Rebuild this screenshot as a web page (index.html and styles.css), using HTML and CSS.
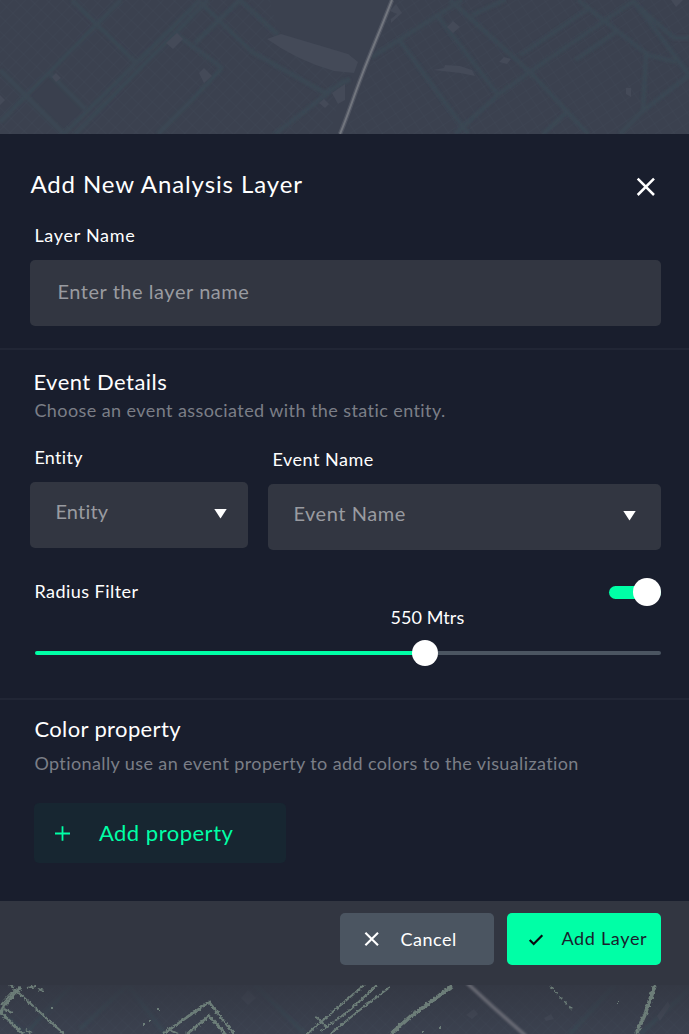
FILE: index.html
```html
<!DOCTYPE html>
<html lang="en">
<head>
<meta charset="utf-8">
<title>Add New Analysis Layer</title>
<link rel="stylesheet" href="styles.css">
</head>
<body>
<div class="screen">
  <svg class="map" width="689" height="134" viewBox="0 0 689 134" aria-hidden="true">
    <defs>
      <filter id="soft"><feGaussianBlur stdDeviation=".8"/></filter>
      <pattern id="blocks" width="9" height="11" patternUnits="userSpaceOnUse" patternTransform="rotate(44)"><path d="M0 0H9M0 0V11" class="street"/></pattern>
      <pattern id="blocks-east" width="11" height="9" patternUnits="userSpaceOnUse" patternTransform="rotate(-34)"><path d="M0 0H11M0 0V9" class="street"/></pattern>
    </defs>
    <path d="M0 0H270L278 34L350 54L330 134H0Z" fill="url(#blocks)"/>
    <path d="M394 0H689V134H345Z" fill="url(#blocks-east)"/>
    <path class="block-dark" d="M35 88L50 76L84 109L64 128L30 95Z"/>
    <g class="road" filter="url(#soft)">
      <path d="M0 122L121 0M64 134L200 0M75 134L208 0M0 70L64 134M48 72L85 109M72 0L135 62M175 33L222 68M195 43L240 0M198 0L252 52L325 93L350 79M240 0L278 35M158 134L190 102L222 68M275 134L345 80"/>
      <path d="M372 57L462 0M400 41L468 134M437 15L498 95M450 0L531 73L588 134M455 134L499 94L531 71L635 0M520 55L587 10M543 134L569 110M472 15L505 0M578 0L648 55L676 62M633 0L689 75M634 3L674 38L689 38M646 55L643 111L620 134M643 111L689 75M575 60L618 31"/>
    </g>
    <path class="area" d="M267 39L281 34L348 54L358 62L354 73L334 71Q298 61 267 39Z"/>
    <path class="area" d="M52 77L56 73L61 78L56 82ZM166 43L177 33L183 39L173 49ZM199 73L204 68L212 76L204 83ZM319 103L324 99L329 104L325 108ZM332 93L345 84V100L338 104ZM0 95L5 100L0 105ZM447 27L453 21L460 27L453 33ZM499 62L504 57L511 59L507 64ZM433 70L444 68L445 65L460 66L472 70L475 76L460 73ZM626 88H631V97L626 94ZM671 0H683L676 7ZM390 11L396 4L402 13L391 23V19L397 14Z"/>
    <path class="highway-glow" d="M392 0C380 31 372 49 362 75S348 115 340 134"/>
    <path class="highway" d="M392 0C380 31 372 49 362 75S348 115 340 134"/>
  </svg>

  <main class="dialog">
    <section class="section section-layer">
      <header class="dialog-header">
        <h1 class="title">Add New Analysis Layer</h1>
        <svg class="close" width="20" height="20" viewBox="0 0 20 20"><path d="M1.7 1.7L18 18M18 1.7L1.7 18" fill="none" stroke="#fff" stroke-width="2.5"/></svg>
      </header>
      <div class="label label-name">Layer Name</div>
      <div class="field field-name">Enter the layer name</div>
    </section>

    <section class="section section-event">
      <h2 class="heading heading-event">Event Details</h2>
      <p class="hint hint-event">Choose an event associated with the static entity.</p>
      <div class="selects">
        <div class="select-group entity">
          <div class="label entity-label">Entity</div>
          <div class="field select"><span class="entity-value">Entity</span><svg width="13" height="10" viewBox="0 0 13 10"><path d="M.3 0H12.7L6.5 9.5Z" fill="#fff"/></svg></div>
        </div>
        <div class="select-group event">
          <div class="label event-label">Event Name</div>
          <div class="field select"><span class="event-value">Event Name</span><svg width="13" height="10" viewBox="0 0 13 10"><path d="M.3 0H12.7L6.5 9.5Z" fill="#fff"/></svg></div>
        </div>
      </div>
      <div class="radius">
        <div class="label radius-label">Radius Filter</div>
        <div class="toggle"><span class="toggle-knob"></span></div>
      </div>
      <div class="radius-value">550 Mtrs</div>
      <div class="slider"><span class="slider-fill"></span><span class="slider-knob"></span><span class="slider-rest"></span></div>
    </section>

    <section class="section section-color">
      <h2 class="heading heading-color">Color property</h2>
      <p class="hint hint-color">Optionally use an event property to add colors to the visualization</p>
      <div class="add-property">
        <svg width="15" height="15" viewBox="0 0 15 15"><path d="M0 7.5H15M7.5 .3V14.7" stroke="#00ffa6" stroke-width="1.8"/></svg>
        <span class="add-property-text">Add property</span>
      </div>
    </section>
  </main>

  <footer class="actions">
    <div class="button cancel">
      <svg width="16" height="16" viewBox="0 0 16 16"><path d="M1.4 1.7L14 14.3M14 1.7L1.4 14.3" stroke="#fff" stroke-width="2.1"/></svg>
      <span class="cancel-text">Cancel</span>
    </div>
    <div class="button confirm">
      <svg width="16" height="14" viewBox="0 0 16 14"><path d="M1.7 7L5.7 11L14.3 2.3" fill="none" stroke="#080b10" stroke-width="2.2"/></svg>
      <span class="confirm-text">Add Layer</span>
    </div>
  </footer>

  <svg class="map" width="689" height="49" viewBox="0 0 689 49" aria-hidden="true">
    <defs>
      <linearGradient id="shade" x2="0" y2="1"><stop stop-color="#323641" stop-opacity=".8"/><stop offset="1" stop-color="#323641" stop-opacity="0"/></linearGradient>
      <pattern id="blocks-south" width="8" height="10" patternUnits="userSpaceOnUse" patternTransform="rotate(44)"><path d="M0 0H8M0 0V10" class="street"/></pattern>
      <filter id="rough" x="-5%" y="-20%" width="110%" height="140%"><feTurbulence type="fractalNoise" baseFrequency=".4" numOctaves="2" seed="4"/><feDisplacementMap in="SourceGraphic" scale="4" xChannelSelector="R" yChannelSelector="G"/><feGaussianBlur stdDeviation=".35"/></filter>
    </defs>
    <rect width="689" height="49" fill="url(#blocks-south)"/>
    <path class="road" filter="url(#soft)" d="M25 49L72 0M80 44L128 0L165 49M255 0L305 49M570 49L615 0M640 49L689 5M0 25L25 49"/>
    <path class="area" d="M241 13L248 5L256 13L248 20ZM466 30L474 24L478 29L472 34ZM544 33L551 29L554 34L546 36ZM657 31L668 16L670 21L660 36Z"/>
    <rect width="689" height="49" fill="url(#shade)"/>
    <g class="trace" filter="url(#rough)">
      <path d="M10 0L64 49" stroke-width="2"/>
      <path d="M21 2L3 22L1 28L23 49" stroke-width="3.2"/>
      <path d="M163 49L209 17L234 49M187 49L209 31L226 49" stroke-width="2.6"/>
      <path d="M307 49L364 0M321 46L350 25L377 0M330 49L366 20L390 2" stroke-width="2"/>
      <path d="M391 49L411 31L428 19L452 1" stroke-width="3.8"/>
      <path d="M655 0L646 27L636 49" stroke-width="4"/>
      <path d="M4 24L12 28M1 20L15 5M168 44L178 49M27 3L36 1M38 4L44 6M26 45L32 48M316 32L327 42" stroke-width="2"/>
      <path d="M550 1L560 12L574 26" stroke-width="1.4" stroke-dasharray="4 3"/>
      <path d="M51 23H53M157 24H159M143 40H145M149 36H151M422 46H424M439 43H441M617 18H618" stroke-width="2"/>
    </g>
    <path class="south-highway" filter="url(#soft)" d="M467 -2L493 22L526 51"/>
  </svg>
</div>
</body>
</html>
```

FILE: styles.css
```css
* { box-sizing: border-box; }
body { margin: 0; background: #3b414f; font-family: Lato, "Open Sans", sans-serif; color: #fff; }
h1, h2, p { margin: 0; font-weight: 400; }
.screen { width: 689px; height: 1034px; display: flex; flex-direction: column; overflow: hidden; }
svg { display: block; flex: none; }

.map { background: #3b414f; }
.street { fill: none; stroke: #444b5a; stroke-width: .7; opacity: .6; }
.block-dark { fill: #3a404e; }
.road { fill: none; stroke: #3b4955; stroke-width: 4.5; opacity: .8; }
.area { fill: #444a58; }
.highway-glow { fill: none; stroke: #5b606b; stroke-width: 4.5; opacity: .65; }
.highway { fill: none; stroke: #7b7e86; stroke-width: 2; opacity: .8; }
.south-highway { fill: none; stroke: #7b7c84; stroke-width: 3.6; opacity: .7; }
.trace { fill: none; stroke: #768981; opacity: .85; }

.dialog { height: 767px; background: #191e2d; }
.section { padding-left: 30.4px; padding-right: 27.6px; }
.section-layer { height: 216px; padding-top: 35px; border-bottom: 2px solid #212635; }
.section-event { height: 350px; padding-top: 18px; border-bottom: 2px solid #212635; }
.section-color { padding-top: 15px; }

.dialog-header { display: flex; justify-content: space-between; height: 30px; padding-right: 5px; }
.title { font-size: 24px; line-height: 30px; letter-spacing: .9px; }
.close { margin-top: 8px; }
.label { font-size: 18px; line-height: 24px; padding-left: 4px; letter-spacing: .3px; white-space: nowrap; }
.label-name { margin-top: 24px; letter-spacing: .7px; }
.field { height: 66px; margin-top: 13px; padding: 0 27px 3px; border-radius: 5px; background: #323641; color: #999ba0; font-size: 20px; line-height: 63px; letter-spacing: .55px; }

.heading { font-size: 22px; line-height: 28px; padding-left: 3px; letter-spacing: .5px; }
.heading-color { padding-left: 4px; letter-spacing: .37px; }
.hint { font-size: 18px; line-height: 24px; padding-left: 4px; color: #7b7e87; white-space: nowrap; }
.hint-event { margin-top: 2px; letter-spacing: .42px; }
.hint-color { margin-top: 8px; letter-spacing: .39px; }

.selects { display: flex; gap: 20px; margin-top: 23px; }
.entity { width: 218px; }
.event { width: 393px; padding-top: 2px; }
.event-label { letter-spacing: .52px; }
.select { display: flex; align-items: center; justify-content: space-between; padding: 0 21.5px 7px 25px; line-height: 59px; }
.select svg { margin-top: 4px; }
.entity-value { letter-spacing: .2px; }
.event .select { padding-right: 25.5px; }

.radius { display: flex; justify-content: space-between; height: 28px; margin-top: 28px; }
.radius-label { margin-top: 1px; letter-spacing: .46px; }
.toggle { width: 52px; height: 13px; margin-top: 8px; border-radius: 7px; background: #00ffa6; display: flex; justify-content: flex-end; align-items: center; }
.toggle-knob { width: 28px; height: 28px; flex: none; margin-top: -1px; border-radius: 50%; background: #fff; }
.radius-value { width: 100px; margin: -1px 0 0 347px; text-align: center; font-size: 18px; line-height: 24px; letter-spacing: .1px; }
.slider { display: flex; align-items: center; height: 26px; margin: 11px 0 0 4.6px; }
.slider-fill { width: 378px; height: 4px; border-radius: 2px 0 0 2px; background: #00ffa6; }
.slider-knob { width: 26px; height: 26px; flex: none; margin: 0 -1px; border-radius: 50%; background: #fff; z-index: 1; }
.slider-rest { flex: 1; height: 4px; border-radius: 0 2px 2px 0; background: #4b5561; }

.add-property { display: flex; align-items: center; gap: 29px; width: 252px; height: 60px; margin: 28px 0 0 3.5px; padding-left: 21px; border-radius: 5px; background: #172631; color: #00ffa6; font-size: 22px; line-height: 28px; letter-spacing: .5px; }

.actions { display: flex; justify-content: flex-end; gap: 13px; height: 84px; padding: 12px 27.6px 0 0; background: #323641; }
.button { display: flex; align-items: center; width: 154px; height: 52px; border-radius: 5px; font-size: 18px; line-height: 24px; white-space: nowrap; }
.cancel { gap: 20px; padding-left: 24px; background: #4b5561; letter-spacing: .55px; }
.confirm { gap: 17px; padding-left: 21px; background: #00ffa6; color: #191e2d; letter-spacing: .68px; }
.confirm svg { margin-top: 2px; }
.confirm-text { margin-top: -3px; }
.cancel-text { margin-top: -1px; }
```
